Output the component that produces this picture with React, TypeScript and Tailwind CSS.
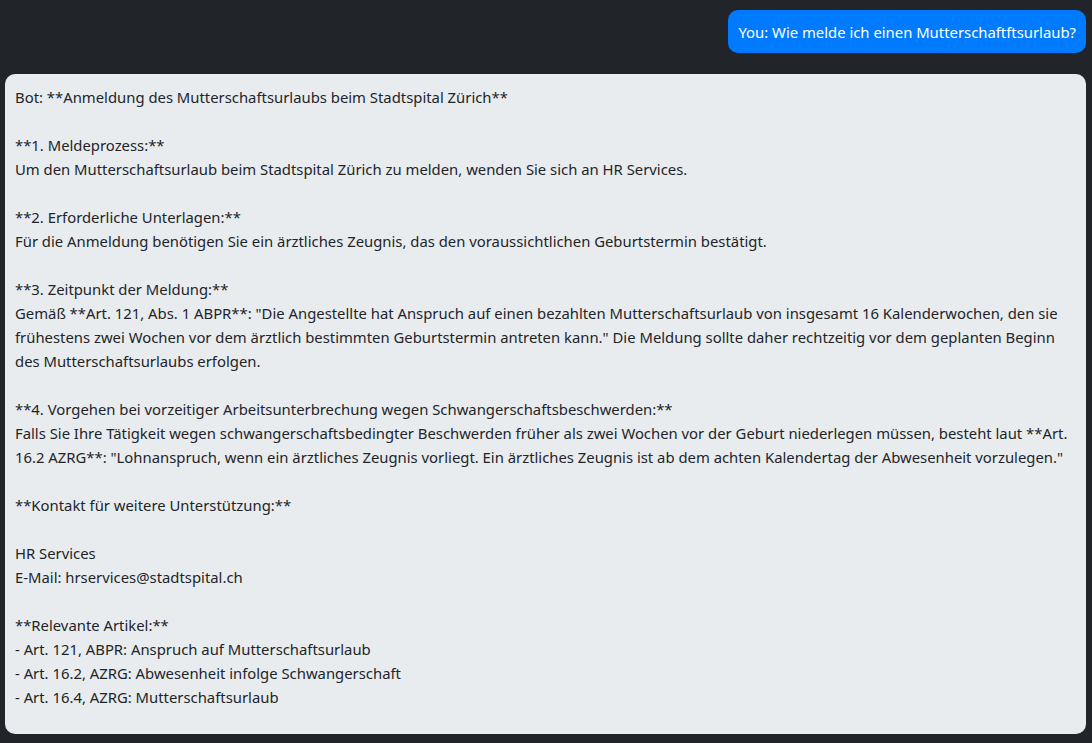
import React from 'react';

const botText = `Bot: **Anmeldung des Mutterschaftsurlaubs beim Stadtspital Zürich**

**1. Meldeprozess:**
Um den Mutterschaftsurlaub beim Stadtspital Zürich zu melden, wenden Sie sich an HR Services.

**2. Erforderliche Unterlagen:**
Für die Anmeldung benötigen Sie ein ärztliches Zeugnis, das den voraussichtlichen Geburtstermin bestätigt.

**3. Zeitpunkt der Meldung:**
Gemäß **Art. 121, Abs. 1 ABPR**: "Die Angestellte hat Anspruch auf einen bezahlten Mutterschaftsurlaub von insgesamt 16 Kalenderwochen, den sie frühestens zwei Wochen vor dem ärztlich bestimmten Geburtstermin antreten kann." Die Meldung sollte daher rechtzeitig vor dem geplanten Beginn des Mutterschaftsurlaubs erfolgen.

**4. Vorgehen bei vorzeitiger Arbeitsunterbrechung wegen Schwangerschaftsbeschwerden:**
Falls Sie Ihre Tätigkeit wegen schwangerschaftsbedingter Beschwerden früher als zwei Wochen vor der Geburt niederlegen müssen, besteht laut **Art. 16.2 AZRG**: "Lohnanspruch, wenn ein ärztliches Zeugnis vorliegt. Ein ärztliches Zeugnis ist ab dem achten Kalendertag der Abwesenheit vorzulegen."

**Kontakt für weitere Unterstützung:**

HR Services
E-Mail: hrservices@stadtspital.ch

**Relevante Artikel:**
- Art. 121, ABPR: Anspruch auf Mutterschaftsurlaub
- Art. 16.2, AZRG: Abwesenheit infolge Schwangerschaft
- Art. 16.4, AZRG: Mutterschaftsurlaub`;

export default function App() {
  return (
    <div className="min-h-screen bg-[#212529] pl-[5px] pr-[6px] pt-[10px] font-['Noto_Sans',sans-serif] text-[14.85px]">
      <div className="flex flex-col gap-[21px]">
        <div className="self-end rounded-[10px] bg-[#007bff] px-[10px] pt-[10px] pb-[9px] leading-6 text-white">
          You: Wie melde ich einen Mutterschaftftsurlaub?
        </div>
        <div className="rounded-[10px] bg-[#e9ecef] px-[10px] pt-[11px] pb-[25px] leading-6 text-[#212529] whitespace-pre-wrap">
          {botText}
        </div>
      </div>
    </div>
  );
}
